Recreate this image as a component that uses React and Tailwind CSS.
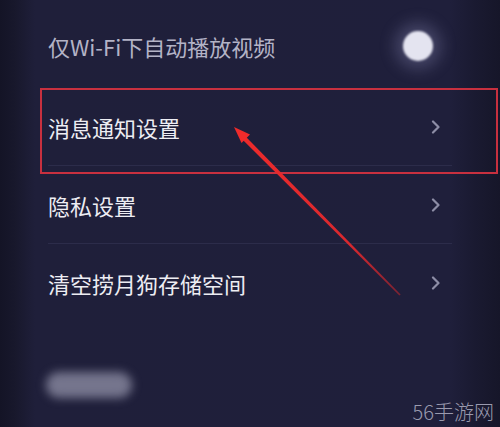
import React from "react";

const font = { fontFamily: '"Noto Sans CJK SC", "Noto Sans", sans-serif' };

function Chevron() {
  return (
    <svg width="10" height="14" viewBox="0 0 10 14" className="mr-[11px] shrink-0">
      <path d="M2 1.5 L7.5 7 L2 12.5" fill="none" stroke="#8d8da6" strokeWidth="2.2" strokeLinecap="round" strokeLinejoin="round" />
    </svg>
  );
}

function Row({ label, divider = true }) {
  return (
    <div className={`flex h-[78px] items-center justify-between ${divider ? "border-b border-[#2c2c4a]" : ""}`}>
      <span className="text-[22px] leading-none text-[#ededf3]" style={font}>{label}</span>
      <Chevron />
    </div>
  );
}

export default function App() {
  return (
    <div
      className="relative h-[427px] w-[500px] overflow-hidden bg-[linear-gradient(to_right,#141426_0%,#18182c_3%,#1f1f3a_7%,#1f1f3b_90%,#1a1a31_95%,#161629_100%)]"
      style={font}
    >
      <div className="flex flex-col px-[48px]">
        <div className="flex h-[88px] items-center justify-between pt-[4px]">
          <span className="text-[22px] leading-none text-[#b3b3c6]">仅Wi-Fi下自动播放视频</span>
          <div className="mr-[19px] h-[30px] w-[30px] rounded-full bg-[#e4e4f0] shadow-[0_0_16px_8px_rgba(160,160,205,0.3)] blur-[0.8px]" />
        </div>
        <Row label="消息通知设置" />
        <Row label="隐私设置" />
        <Row label="清空捞月狗存储空间" divider={false} />
      </div>

      <div className="mt-[50px] flex items-center pl-[46px]">
        <div className="h-[26px] w-[86px] rounded-full bg-[#9a9ab0]/70 blur-[5px]" />
      </div>

      <div className="absolute left-[40px] top-[88px] h-[86px] w-[458px] border-2 border-[#c8303f]" />

      <svg className="absolute left-0 top-0" width="500" height="427" viewBox="0 0 500 427">
        <defs>
          <linearGradient id="ag" x1="234" y1="127" x2="400" y2="295" gradientUnits="userSpaceOnUse">
            <stop offset="0" stopColor="#ef2b2b" />
            <stop offset="0.7" stopColor="#d8282e" />
            <stop offset="1" stopColor="#7a2232" />
          </linearGradient>
        </defs>
        <polygon
          points="400.6,294.4 399.4,295.6 242.4,139.6 245.6,136.4"
          fill="url(#ag)"
        />
        <polygon points="234,127 250,134.5 241.5,143" fill="#ef2b2b" />
      </svg>

      <div className="absolute bottom-[5px] right-[6px] text-[20px] font-light leading-none text-[#9a9aae]" style={font}>
        56手游网
      </div>
    </div>
  );
}
